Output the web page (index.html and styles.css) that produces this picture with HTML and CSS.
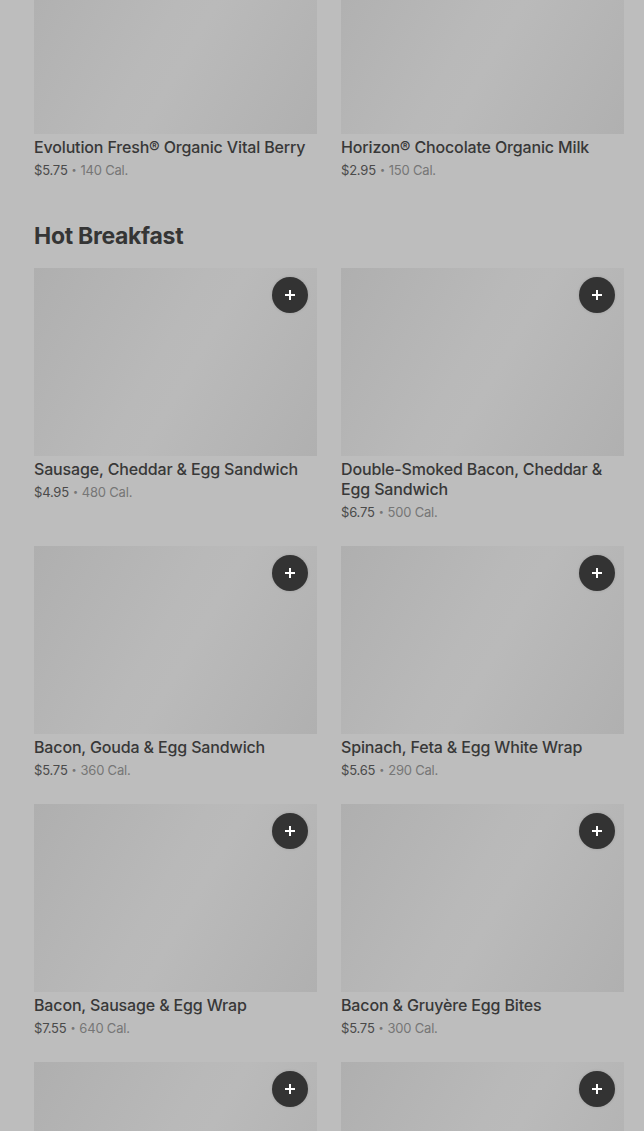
FILE: index.html
```html
<!DOCTYPE html>
<html>
<head>
<meta charset="utf-8">
<link rel="stylesheet" href="styles.css">
</head>
<body>
<main class="page">
  <section class="section section-top">
    <div class="grid">
      <div class="item">
        <div class="thumb"></div>
        <div class="name">Evolution Fresh® Organic Vital Berry</div>
        <div class="meta"><span class="price">$5.75</span><span class="dot">•</span>140 Cal.</div>
      </div>
      <div class="item">
        <div class="thumb"></div>
        <div class="name">Horizon® Chocolate Organic Milk</div>
        <div class="meta"><span class="price">$2.95</span><span class="dot">•</span>150 Cal.</div>
      </div>
    </div>
  </section>

  <section class="section">
    <h2 class="heading">Hot Breakfast</h2>
    <div class="grid">
      <div class="item">
        <div class="thumb"><button class="add"><svg viewBox="0 0 12 12" width="12" height="12"><path d="M6 1v10M1 6h10" stroke="#fff" stroke-width="2"/></svg></button></div>
        <div class="name">Sausage, Cheddar &amp; Egg Sandwich</div>
        <div class="meta"><span class="price">$4.95</span><span class="dot">•</span>480 Cal.</div>
      </div>
      <div class="item">
        <div class="thumb"><button class="add"><svg viewBox="0 0 12 12" width="12" height="12"><path d="M6 1v10M1 6h10" stroke="#fff" stroke-width="2"/></svg></button></div>
        <div class="name">Double-Smoked Bacon, Cheddar &amp; Egg Sandwich</div>
        <div class="meta"><span class="price">$6.75</span><span class="dot">•</span>500 Cal.</div>
      </div>
      <div class="item">
        <div class="thumb"><button class="add"><svg viewBox="0 0 12 12" width="12" height="12"><path d="M6 1v10M1 6h10" stroke="#fff" stroke-width="2"/></svg></button></div>
        <div class="name">Bacon, Gouda &amp; Egg Sandwich</div>
        <div class="meta"><span class="price">$5.75</span><span class="dot">•</span>360 Cal.</div>
      </div>
      <div class="item">
        <div class="thumb"><button class="add"><svg viewBox="0 0 12 12" width="12" height="12"><path d="M6 1v10M1 6h10" stroke="#fff" stroke-width="2"/></svg></button></div>
        <div class="name">Spinach, Feta &amp; Egg White Wrap</div>
        <div class="meta"><span class="price">$5.65</span><span class="dot">•</span>290 Cal.</div>
      </div>
      <div class="item">
        <div class="thumb"><button class="add"><svg viewBox="0 0 12 12" width="12" height="12"><path d="M6 1v10M1 6h10" stroke="#fff" stroke-width="2"/></svg></button></div>
        <div class="name">Bacon, Sausage &amp; Egg Wrap</div>
        <div class="meta"><span class="price">$7.55</span><span class="dot">•</span>640 Cal.</div>
      </div>
      <div class="item">
        <div class="thumb"><button class="add"><svg viewBox="0 0 12 12" width="12" height="12"><path d="M6 1v10M1 6h10" stroke="#fff" stroke-width="2"/></svg></button></div>
        <div class="name">Bacon &amp; Gruyère Egg Bites</div>
        <div class="meta"><span class="price">$5.75</span><span class="dot">•</span>300 Cal.</div>
      </div>
      <div class="item">
        <div class="thumb"><button class="add"><svg viewBox="0 0 12 12" width="12" height="12"><path d="M6 1v10M1 6h10" stroke="#fff" stroke-width="2"/></svg></button></div>
      </div>
      <div class="item">
        <div class="thumb"><button class="add"><svg viewBox="0 0 12 12" width="12" height="12"><path d="M6 1v10M1 6h10" stroke="#fff" stroke-width="2"/></svg></button></div>
      </div>
    </div>
  </section>
</main>
</body>
</html>
```

FILE: styles.css
```css
html, body {
  margin: 0;
  padding: 0;
  background: #bdbdbd;
  overflow: hidden;
}
body {
  font-family: Inter, "Noto Sans", Roboto, sans-serif;
  color: #3a3a3a;
}
.page {
  padding: 0 20px 0 34px;
}
.section-top {
  margin-top: -54px;
}
.grid {
  display: grid;
  grid-template-columns: 283px 283px;
  column-gap: 24px;
  row-gap: 25px;
}
.item {
  display: flex;
  flex-direction: column;
}
.thumb {
  position: relative;
  height: 188px;
  background: linear-gradient(120deg, #afafaf 0%, #b9b9b9 45%, #bababa 55%, #b0b0b0 100%);
}
.add {
  position: absolute;
  top: 9px;
  right: 9px;
  width: 36px;
  height: 36px;
  border-radius: 50%;
  border: none;
  padding: 0;
  background: #333333;
  display: flex;
  align-items: center;
  justify-content: center;
  box-shadow: 0 0 3px rgba(0,0,0,0.15);
}
.add svg {
  display: block;
}
.name {
  margin-top: 3px;
  font-size: 16px;
  line-height: 20px;
  font-weight: 500;
  color: #383838;
  letter-spacing: -0.15px;
}
.meta {
  margin-top: 4px;
  font-size: 13px;
  line-height: 18px;
  color: #767676;
  letter-spacing: -0.2px;
}
.price {
  color: #4a4a4a;
}
.dot {
  display: inline-block;
  font-size: 9px;
  margin: 0 4px;
  vertical-align: 2px;
}
.heading {
  margin: 42px 0 17px;
  font-size: 23px;
  line-height: 30px;
  font-weight: 700;
  color: #353535;
  letter-spacing: -0.3px;
}
```
